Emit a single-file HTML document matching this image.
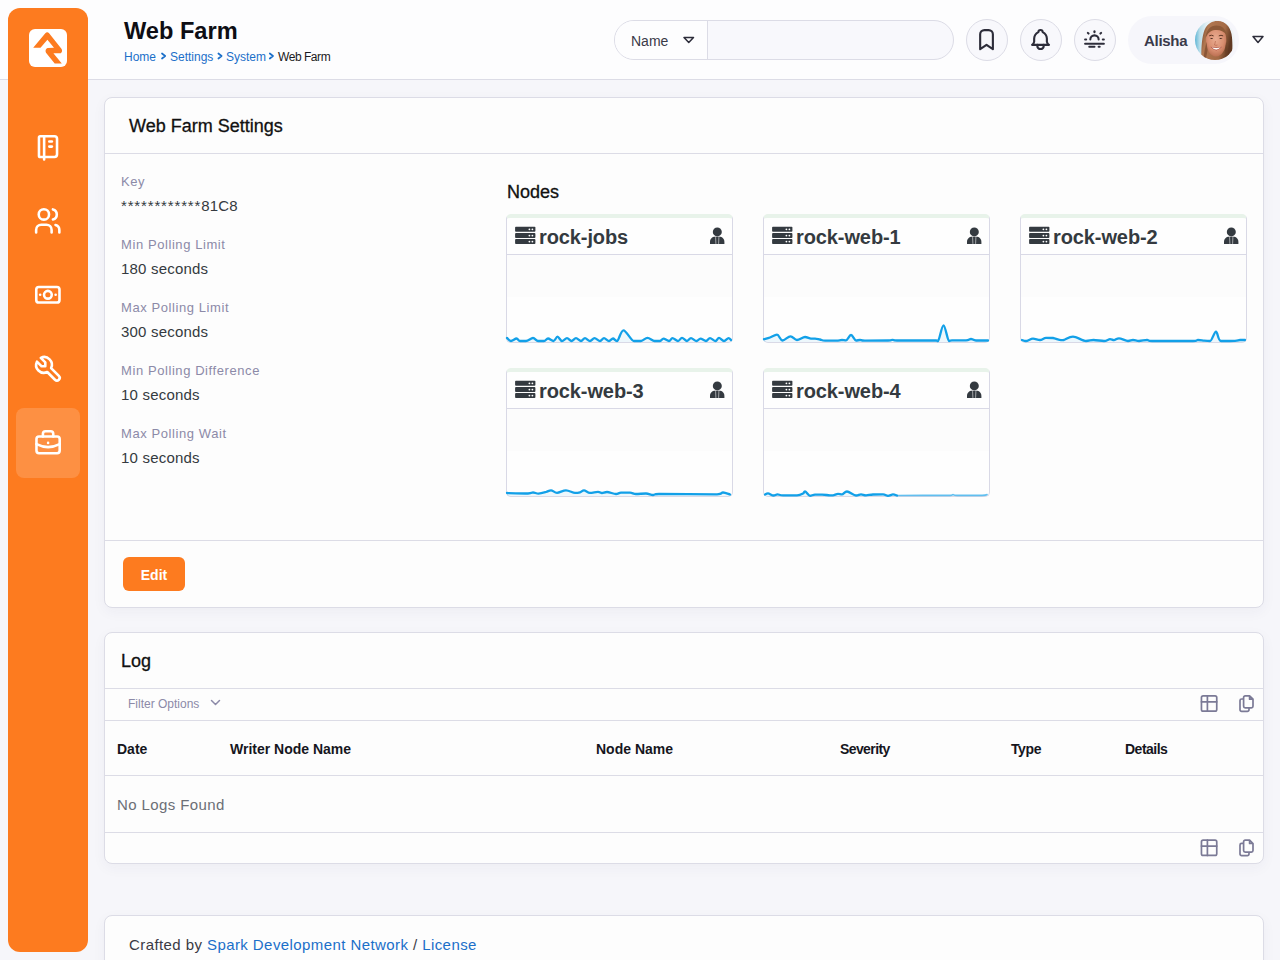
<!DOCTYPE html>
<html><head><meta charset="utf-8">
<style>
*{box-sizing:border-box;margin:0;padding:0}
html,body{width:1280px;height:960px;overflow:hidden}
body{font-family:"Liberation Sans",sans-serif;background:#f6f6fa;position:relative;color:#212529}
.abs{position:absolute}
svg{position:absolute;overflow:visible}
#topbar{position:absolute;left:0;top:0;width:1280px;height:80px;background:#fdfdfe;border-bottom:1px solid #dcdce6}
#side{position:absolute;left:8px;top:8px;width:80px;height:944px;background:#fd7b1f;border-radius:12px}
.panel{position:absolute;left:104px;width:1160px;background:#fdfdfd;border:1px solid #dcdce6;border-radius:8px;box-shadow:0 4px 14px rgba(40,40,90,0.045)}
.t{position:absolute;white-space:nowrap;line-height:1}
.hline{position:absolute;left:0;right:0;height:1px;background:#dcdce6}
.lbl{color:#8c8aa8;font-size:13px;letter-spacing:0.58px}
.val{color:#343a40;font-size:15px;letter-spacing:0.2px}
.card{position:absolute;width:227px;height:129px;border:1px solid #d9d9e6;border-top:4px solid #e8f3ea;border-radius:5px;background:#fefefe;overflow:hidden}
.card .gb{position:absolute;left:0;right:0;top:0;height:4px;background:#e8f3ea}
.card .hd{position:absolute;left:0;right:0;top:0;height:37px;border-bottom:1px solid #d9d9e6}
.card .ch{position:absolute;left:0;right:0;top:37px;height:42px;background:#fcfcfc}
.card .nm{position:absolute;left:32px;top:9px;font-size:20px;font-weight:bold;color:#343a40;letter-spacing:-0.1px;line-height:1}
.th{position:absolute;top:741.5px;font-size:14px;font-weight:bold;color:#16161d;line-height:1}
.sl{fill:none;stroke:#12a0e8;stroke-width:2.3;stroke-linejoin:round;stroke-linecap:round}
.sf{fill:#12a0e8;fill-opacity:0.07;stroke:none}
.ic{fill:none;stroke:#fff;stroke-width:2;stroke-linecap:round;stroke-linejoin:round}
.hi{fill:none;stroke:#2d2d3a;stroke-width:2;stroke-linecap:round;stroke-linejoin:round}
.gi{fill:none;stroke:#7b7a96;stroke-width:2;stroke-linecap:round;stroke-linejoin:round}
</style></head>
<body>
<div id="topbar"></div>
<div id="side"></div>
<div class="abs" style="left:16px;top:408px;width:64px;height:70px;border-radius:8px;background:rgba(255,255,255,0.16)"></div>



<!-- title -->
<div class="t" style="left:124px;top:19.5px;font-size:23.6px;font-weight:bold;color:#0e0e14">Web Farm</div>
<div class="t" style="left:124px;top:50.5px;font-size:12px;color:#1b6fc9">Home</div>
<div class="t" style="left:170px;top:50.5px;font-size:12px;color:#1b6fc9">Settings</div>
<div class="t" style="left:226px;top:50.5px;font-size:12px;color:#1b6fc9">System</div>
<div class="t" style="left:278px;top:50.5px;font-size:12px;color:#1a1a22;letter-spacing:-0.45px">Web Farm</div>
<!-- panel 1 -->
<div class="panel" style="top:97px;height:511px">
  <div class="hline" style="top:55px"></div>
  <div class="hline" style="top:442px"></div>
</div>
<div class="t" style="left:129px;top:117px;font-size:18px;color:#111;-webkit-text-stroke:0.3px #111">Web Farm Settings</div>

<div class="t lbl" style="left:121px;top:175px">Key</div>
<div class="t val" style="left:121px;top:197.5px"><span style="letter-spacing:0.85px">************</span>81C8</div>
<div class="t lbl" style="left:121px;top:237.5px">Min Polling Limit</div>
<div class="t val" style="left:121px;top:261px">180 seconds</div>
<div class="t lbl" style="left:121px;top:300.5px">Max Polling Limit</div>
<div class="t val" style="left:121px;top:324px">300 seconds</div>
<div class="t lbl" style="left:121px;top:363.5px">Min Polling Difference</div>
<div class="t val" style="left:121px;top:387px">10 seconds</div>
<div class="t lbl" style="left:121px;top:426.5px">Max Polling Wait</div>
<div class="t val" style="left:121px;top:450px">10 seconds</div>

<div class="t" style="left:507px;top:183px;font-size:18px;color:#111;-webkit-text-stroke:0.3px #111">Nodes</div>

<div class="card" style="left:506px;top:214px"><div class="hd"></div><div class="ch"></div><div class="nm">rock-jobs</div></div>
<div class="card" style="left:763px;top:214px"><div class="hd"></div><div class="ch"></div><div class="nm">rock-web-1</div></div>
<div class="card" style="left:1020px;top:214px"><div class="hd"></div><div class="ch"></div><div class="nm">rock-web-2</div></div>
<div class="card" style="left:506px;top:368px"><div class="hd"></div><div class="ch"></div><div class="nm">rock-web-3</div></div>
<div class="card" style="left:763px;top:368px"><div class="hd"></div><div class="ch"></div><div class="nm">rock-web-4</div></div>

<svg style="left:0;top:0" width="1280" height="960" viewBox="0 0 1280 960">
  
  <g fill="#343a40" transform="translate(515.1 226.8)">
      <rect x="0" y="0" width="20.3" height="5" rx="0.8"/>
      <rect x="0" y="6.3" width="20.3" height="5" rx="0.8"/>
      <rect x="0" y="12.3" width="20.3" height="5" rx="0.8"/>
      <g fill="#fff"><circle cx="14.3" cy="2.5" r="0.9"/><circle cx="17.3" cy="2.5" r="0.9"/><circle cx="14.3" cy="8.8" r="0.9"/><circle cx="17.3" cy="8.8" r="0.9"/><circle cx="14.3" cy="14.8" r="0.9"/><circle cx="17.3" cy="14.8" r="0.9"/></g>
    </g>
  <g fill="#343a40" transform="translate(772.1 226.8)">
      <rect x="0" y="0" width="20.3" height="5" rx="0.8"/>
      <rect x="0" y="6.3" width="20.3" height="5" rx="0.8"/>
      <rect x="0" y="12.3" width="20.3" height="5" rx="0.8"/>
      <g fill="#fff"><circle cx="14.3" cy="2.5" r="0.9"/><circle cx="17.3" cy="2.5" r="0.9"/><circle cx="14.3" cy="8.8" r="0.9"/><circle cx="17.3" cy="8.8" r="0.9"/><circle cx="14.3" cy="14.8" r="0.9"/><circle cx="17.3" cy="14.8" r="0.9"/></g>
    </g>
  <g fill="#343a40" transform="translate(1029.1 226.8)">
      <rect x="0" y="0" width="20.3" height="5" rx="0.8"/>
      <rect x="0" y="6.3" width="20.3" height="5" rx="0.8"/>
      <rect x="0" y="12.3" width="20.3" height="5" rx="0.8"/>
      <g fill="#fff"><circle cx="14.3" cy="2.5" r="0.9"/><circle cx="17.3" cy="2.5" r="0.9"/><circle cx="14.3" cy="8.8" r="0.9"/><circle cx="17.3" cy="8.8" r="0.9"/><circle cx="14.3" cy="14.8" r="0.9"/><circle cx="17.3" cy="14.8" r="0.9"/></g>
    </g>
  <g fill="#343a40" transform="translate(515.1 380.8)">
      <rect x="0" y="0" width="20.3" height="5" rx="0.8"/>
      <rect x="0" y="6.3" width="20.3" height="5" rx="0.8"/>
      <rect x="0" y="12.3" width="20.3" height="5" rx="0.8"/>
      <g fill="#fff"><circle cx="14.3" cy="2.5" r="0.9"/><circle cx="17.3" cy="2.5" r="0.9"/><circle cx="14.3" cy="8.8" r="0.9"/><circle cx="17.3" cy="8.8" r="0.9"/><circle cx="14.3" cy="14.8" r="0.9"/><circle cx="17.3" cy="14.8" r="0.9"/></g>
    </g>
  <g fill="#343a40" transform="translate(772.1 380.8)">
      <rect x="0" y="0" width="20.3" height="5" rx="0.8"/>
      <rect x="0" y="6.3" width="20.3" height="5" rx="0.8"/>
      <rect x="0" y="12.3" width="20.3" height="5" rx="0.8"/>
      <g fill="#fff"><circle cx="14.3" cy="2.5" r="0.9"/><circle cx="17.3" cy="2.5" r="0.9"/><circle cx="14.3" cy="8.8" r="0.9"/><circle cx="17.3" cy="8.8" r="0.9"/><circle cx="14.3" cy="14.8" r="0.9"/><circle cx="17.3" cy="14.8" r="0.9"/></g>
    </g>
  <g transform="translate(717.3 231.9)">
      <circle cx="0" cy="0" r="4.5" fill="#343a40"/>
      <path d="M-7.3 12 V10.2 C-7.3 6.8 -5.2 4.9 -2.2 4.9 H2 C5 4.9 7.1 6.8 7.1 10.2 V12 Z" fill="#343a40"/>
      <path d="M-1.7 5.2 L-1.4 12 M1.6 5.2 L1.3 12" stroke="#fff" stroke-width="0.55"/>
    </g>
  <g transform="translate(974.3 231.9)">
      <circle cx="0" cy="0" r="4.5" fill="#343a40"/>
      <path d="M-7.3 12 V10.2 C-7.3 6.8 -5.2 4.9 -2.2 4.9 H2 C5 4.9 7.1 6.8 7.1 10.2 V12 Z" fill="#343a40"/>
      <path d="M-1.7 5.2 L-1.4 12 M1.6 5.2 L1.3 12" stroke="#fff" stroke-width="0.55"/>
    </g>
  <g transform="translate(1231.3 231.9)">
      <circle cx="0" cy="0" r="4.5" fill="#343a40"/>
      <path d="M-7.3 12 V10.2 C-7.3 6.8 -5.2 4.9 -2.2 4.9 H2 C5 4.9 7.1 6.8 7.1 10.2 V12 Z" fill="#343a40"/>
      <path d="M-1.7 5.2 L-1.4 12 M1.6 5.2 L1.3 12" stroke="#fff" stroke-width="0.55"/>
    </g>
  <g transform="translate(717.3 385.9)">
      <circle cx="0" cy="0" r="4.5" fill="#343a40"/>
      <path d="M-7.3 12 V10.2 C-7.3 6.8 -5.2 4.9 -2.2 4.9 H2 C5 4.9 7.1 6.8 7.1 10.2 V12 Z" fill="#343a40"/>
      <path d="M-1.7 5.2 L-1.4 12 M1.6 5.2 L1.3 12" stroke="#fff" stroke-width="0.55"/>
    </g>
  <g transform="translate(974.3 385.9)">
      <circle cx="0" cy="0" r="4.5" fill="#343a40"/>
      <path d="M-7.3 12 V10.2 C-7.3 6.8 -5.2 4.9 -2.2 4.9 H2 C5 4.9 7.1 6.8 7.1 10.2 V12 Z" fill="#343a40"/>
      <path d="M-1.7 5.2 L-1.4 12 M1.6 5.2 L1.3 12" stroke="#fff" stroke-width="0.55"/>
    </g>
</svg>
<svg style="left:0;top:0" width="1280" height="960" viewBox="0 0 1280 960">
<path d="M507.0 338.0 C507.7 338.5 509.4 341.0 511.0 341.0 C512.6 341.0 515.0 338.5 516.5 338.5 C518.0 338.5 518.4 341.0 520.0 341.0 C521.6 341.0 523.8 341.0 526.0 341.0 C528.2 341.0 531.0 338.0 533.0 338.0 C535.0 338.0 536.2 341.0 538.0 341.0 C539.8 341.0 542.3 341.0 544.0 341.0 C545.7 341.0 546.4 338.5 548.0 338.5 C549.6 338.5 551.9 341.0 553.5 341.0 C555.1 341.0 556.1 336.7 557.5 336.7 C558.9 336.7 560.4 341.0 562.0 341.0 C563.6 341.0 565.4 338.1 567.0 338.1 C568.6 338.1 570.0 341.0 571.5 341.0 C573.0 341.0 574.4 338.1 576.0 338.1 C577.6 338.1 579.5 341.0 581.0 341.0 C582.5 341.0 583.5 338.1 585.0 338.1 C586.5 338.1 588.4 341.0 590.0 341.0 C591.6 341.0 592.8 338.1 594.5 338.1 C596.2 338.1 598.4 341.0 600.0 341.0 C601.6 341.0 602.5 338.1 604.0 338.1 C605.5 338.1 607.5 341.0 609.0 341.0 C610.5 341.0 611.7 338.5 613.0 338.5 C614.3 338.5 615.2 341.0 617.0 341.0 C618.8 341.0 620.7 330.3 623.5 330.3 C626.3 330.3 631.1 341.0 634.0 341.0 C636.9 341.0 638.8 341.0 641.0 341.0 C643.2 341.0 645.2 337.8 647.5 337.8 C649.8 337.8 652.4 341.0 654.5 341.0 C656.6 341.0 658.5 341.0 660.0 341.0 C661.5 341.0 662.0 338.6 663.5 338.6 C665.0 338.6 667.5 341.0 669.0 341.0 C670.5 341.0 671.0 338.1 672.5 338.1 C674.0 338.1 676.4 341.0 678.0 341.0 C679.6 341.0 680.5 337.8 682.0 337.8 C683.5 337.8 685.5 341.0 687.0 341.0 C688.5 341.0 689.4 338.1 691.0 338.1 C692.6 338.1 694.9 341.0 696.5 341.0 C698.1 341.0 698.9 338.6 700.5 338.6 C702.1 338.6 704.4 341.0 706.0 341.0 C707.6 341.0 708.4 338.1 710.0 338.1 C711.6 338.1 714.0 341.0 715.5 341.0 C717.0 341.0 717.6 337.8 719.0 337.8 C720.4 337.8 722.4 341.0 724.0 341.0 C725.6 341.0 727.3 338.1 728.5 338.1 C729.7 338.1 730.6 339.7 731.0 340.0 L731.0 342 L507.0 342 Z" class="sf"/>
<path d="M507.0 338.0 C507.7 338.5 509.4 341.0 511.0 341.0 C512.6 341.0 515.0 338.5 516.5 338.5 C518.0 338.5 518.4 341.0 520.0 341.0 C521.6 341.0 523.8 341.0 526.0 341.0 C528.2 341.0 531.0 338.0 533.0 338.0 C535.0 338.0 536.2 341.0 538.0 341.0 C539.8 341.0 542.3 341.0 544.0 341.0 C545.7 341.0 546.4 338.5 548.0 338.5 C549.6 338.5 551.9 341.0 553.5 341.0 C555.1 341.0 556.1 336.7 557.5 336.7 C558.9 336.7 560.4 341.0 562.0 341.0 C563.6 341.0 565.4 338.1 567.0 338.1 C568.6 338.1 570.0 341.0 571.5 341.0 C573.0 341.0 574.4 338.1 576.0 338.1 C577.6 338.1 579.5 341.0 581.0 341.0 C582.5 341.0 583.5 338.1 585.0 338.1 C586.5 338.1 588.4 341.0 590.0 341.0 C591.6 341.0 592.8 338.1 594.5 338.1 C596.2 338.1 598.4 341.0 600.0 341.0 C601.6 341.0 602.5 338.1 604.0 338.1 C605.5 338.1 607.5 341.0 609.0 341.0 C610.5 341.0 611.7 338.5 613.0 338.5 C614.3 338.5 615.2 341.0 617.0 341.0 C618.8 341.0 620.7 330.3 623.5 330.3 C626.3 330.3 631.1 341.0 634.0 341.0 C636.9 341.0 638.8 341.0 641.0 341.0 C643.2 341.0 645.2 337.8 647.5 337.8 C649.8 337.8 652.4 341.0 654.5 341.0 C656.6 341.0 658.5 341.0 660.0 341.0 C661.5 341.0 662.0 338.6 663.5 338.6 C665.0 338.6 667.5 341.0 669.0 341.0 C670.5 341.0 671.0 338.1 672.5 338.1 C674.0 338.1 676.4 341.0 678.0 341.0 C679.6 341.0 680.5 337.8 682.0 337.8 C683.5 337.8 685.5 341.0 687.0 341.0 C688.5 341.0 689.4 338.1 691.0 338.1 C692.6 338.1 694.9 341.0 696.5 341.0 C698.1 341.0 698.9 338.6 700.5 338.6 C702.1 338.6 704.4 341.0 706.0 341.0 C707.6 341.0 708.4 338.1 710.0 338.1 C711.6 338.1 714.0 341.0 715.5 341.0 C717.0 341.0 717.6 337.8 719.0 337.8 C720.4 337.8 722.4 341.0 724.0 341.0 C725.6 341.0 727.3 338.1 728.5 338.1 C729.7 338.1 730.6 339.7 731.0 340.0" class="sl"/>
<path d="M764.0 339.2 C765.0 338.9 767.8 338.3 770.0 337.5 C772.2 336.7 774.9 334.6 777.0 334.6 C779.1 334.6 780.2 340.5 782.5 340.5 C784.8 340.5 788.1 336.3 790.5 336.3 C792.9 336.3 794.6 340.0 797.0 340.0 C799.4 340.0 802.7 337.0 805.0 337.0 C807.3 337.0 809.3 338.6 811.0 338.6 C812.7 338.6 813.5 338.6 815.0 338.6 C816.5 338.6 818.3 339.2 820.0 339.5 C821.7 339.8 822.0 340.6 825.0 340.6 C828.0 340.6 835.2 340.6 838.0 340.6 C840.8 340.6 840.7 340.0 842.0 340.0 C843.3 340.0 844.5 340.3 846.0 340.3 C847.5 340.3 849.3 335.0 851.0 335.0 C852.7 335.0 854.5 340.5 856.0 340.5 C857.5 340.5 858.5 340.0 860.0 340.0 C861.5 340.0 860.3 340.6 865.0 340.6 C869.7 340.6 883.4 340.6 888.0 340.5 C892.5 340.4 891.0 339.8 892.5 339.8 C894.0 339.8 892.5 340.5 897.0 340.5 C904.2 340.5 929.2 340.5 936.0 340.5 C938.0 340.5 936.8 341.2 938.0 341.2 C939.2 341.2 941.7 325.3 943.5 325.3 C945.3 325.3 947.6 341.0 949.0 341.0 C950.4 341.0 949.2 340.4 952.0 340.4 C954.8 340.4 962.8 340.4 966.0 340.4 C969.2 340.4 969.3 339.0 971.0 339.0 C972.7 339.0 973.2 340.5 976.0 340.5 C978.8 340.5 986.0 340.5 988.0 340.5 L988.0 342 L764.0 342 Z" class="sf"/>
<path d="M764.0 339.2 C765.0 338.9 767.8 338.3 770.0 337.5 C772.2 336.7 774.9 334.6 777.0 334.6 C779.1 334.6 780.2 340.5 782.5 340.5 C784.8 340.5 788.1 336.3 790.5 336.3 C792.9 336.3 794.6 340.0 797.0 340.0 C799.4 340.0 802.7 337.0 805.0 337.0 C807.3 337.0 809.3 338.6 811.0 338.6 C812.7 338.6 813.5 338.6 815.0 338.6 C816.5 338.6 818.3 339.2 820.0 339.5 C821.7 339.8 822.0 340.6 825.0 340.6 C828.0 340.6 835.2 340.6 838.0 340.6 C840.8 340.6 840.7 340.0 842.0 340.0 C843.3 340.0 844.5 340.3 846.0 340.3 C847.5 340.3 849.3 335.0 851.0 335.0 C852.7 335.0 854.5 340.5 856.0 340.5 C857.5 340.5 858.5 340.0 860.0 340.0 C861.5 340.0 860.3 340.6 865.0 340.6 C869.7 340.6 883.4 340.6 888.0 340.5 C892.5 340.4 891.0 339.8 892.5 339.8 C894.0 339.8 892.5 340.5 897.0 340.5 C904.2 340.5 929.2 340.5 936.0 340.5 C938.0 340.5 936.8 341.2 938.0 341.2 C939.2 341.2 941.7 325.3 943.5 325.3 C945.3 325.3 947.6 341.0 949.0 341.0 C950.4 341.0 949.2 340.4 952.0 340.4 C954.8 340.4 962.8 340.4 966.0 340.4 C969.2 340.4 969.3 339.0 971.0 339.0 C972.7 339.0 973.2 340.5 976.0 340.5 C978.8 340.5 986.0 340.5 988.0 340.5" class="sl"/>
<path d="M1022.0 340.0 C1022.7 340.2 1024.2 341.0 1026.0 341.0 C1027.8 341.0 1030.7 338.6 1033.0 338.6 C1035.3 338.6 1037.8 340.0 1040.0 340.0 C1042.2 340.0 1043.8 337.9 1046.0 337.9 C1048.2 337.9 1050.5 337.9 1053.0 338.0 C1055.5 338.4 1059.2 340.1 1061.0 340.1 C1062.8 340.1 1062.0 340.1 1064.0 340.0 C1066.0 339.4 1069.3 336.6 1073.0 336.6 C1076.7 336.6 1082.6 341.0 1086.0 341.0 C1089.4 341.0 1090.5 340.0 1093.5 340.0 C1096.5 340.0 1101.2 341.0 1104.0 341.0 C1106.8 341.0 1108.3 339.2 1110.0 339.2 C1111.7 339.2 1112.5 340.1 1114.0 340.1 C1115.5 340.1 1116.7 338.3 1119.0 338.3 C1121.3 338.3 1125.7 341.0 1128.0 341.0 C1130.3 341.0 1131.2 340.0 1133.0 340.0 C1134.8 340.0 1136.7 341.0 1139.0 341.0 C1141.3 341.0 1144.8 340.0 1147.0 340.0 C1149.2 340.0 1147.0 341.0 1152.0 341.0 C1159.7 341.0 1185.3 341.0 1193.0 341.0 C1198.0 341.0 1196.2 340.0 1198.0 340.0 C1199.8 340.0 1202.0 340.4 1204.0 340.6 C1206.0 340.8 1208.0 341.0 1210.0 341.0 C1212.0 341.0 1214.2 331.6 1216.0 331.6 C1217.8 331.6 1217.8 341.0 1221.0 341.0 C1224.2 341.0 1231.8 341.0 1235.0 340.8 C1238.2 340.6 1238.3 340.0 1240.0 340.0 C1241.7 340.0 1244.2 340.0 1245.0 340.0 L1245.0 342 L1022.0 342 Z" class="sf"/>
<path d="M1022.0 340.0 C1022.7 340.2 1024.2 341.0 1026.0 341.0 C1027.8 341.0 1030.7 338.6 1033.0 338.6 C1035.3 338.6 1037.8 340.0 1040.0 340.0 C1042.2 340.0 1043.8 337.9 1046.0 337.9 C1048.2 337.9 1050.5 337.9 1053.0 338.0 C1055.5 338.4 1059.2 340.1 1061.0 340.1 C1062.8 340.1 1062.0 340.1 1064.0 340.0 C1066.0 339.4 1069.3 336.6 1073.0 336.6 C1076.7 336.6 1082.6 341.0 1086.0 341.0 C1089.4 341.0 1090.5 340.0 1093.5 340.0 C1096.5 340.0 1101.2 341.0 1104.0 341.0 C1106.8 341.0 1108.3 339.2 1110.0 339.2 C1111.7 339.2 1112.5 340.1 1114.0 340.1 C1115.5 340.1 1116.7 338.3 1119.0 338.3 C1121.3 338.3 1125.7 341.0 1128.0 341.0 C1130.3 341.0 1131.2 340.0 1133.0 340.0 C1134.8 340.0 1136.7 341.0 1139.0 341.0 C1141.3 341.0 1144.8 340.0 1147.0 340.0 C1149.2 340.0 1147.0 341.0 1152.0 341.0 C1159.7 341.0 1185.3 341.0 1193.0 341.0 C1198.0 341.0 1196.2 340.0 1198.0 340.0 C1199.8 340.0 1202.0 340.4 1204.0 340.6 C1206.0 340.8 1208.0 341.0 1210.0 341.0 C1212.0 341.0 1214.2 331.6 1216.0 331.6 C1217.8 331.6 1217.8 341.0 1221.0 341.0 C1224.2 341.0 1231.8 341.0 1235.0 340.8 C1238.2 340.6 1238.3 340.0 1240.0 340.0 C1241.7 340.0 1244.2 340.0 1245.0 340.0" class="sl"/>
<path d="M507.0 493.0 C510.5 493.1 523.7 493.5 528.0 493.5 C532.3 493.5 531.2 492.5 533.0 492.5 C534.8 492.5 536.3 493.6 538.5 493.6 C540.7 493.6 543.9 492.6 546.0 492.0 C548.1 491.4 549.2 490.3 551.0 490.3 C552.8 490.3 554.5 492.8 557.0 492.8 C559.5 492.8 563.0 490.3 566.0 490.3 C569.0 490.3 572.7 492.9 575.0 492.9 C577.3 492.9 578.5 492.7 580.0 492.3 C581.5 491.9 582.3 490.3 584.0 490.3 C585.7 490.3 587.7 492.8 590.0 492.8 C592.3 492.8 596.0 491.8 598.0 491.8 C600.0 491.8 600.5 493.0 602.0 493.0 C603.5 493.0 604.7 492.0 607.0 492.0 C609.3 492.0 613.7 494.0 616.0 494.0 C618.3 494.0 618.7 492.7 621.0 492.7 C623.3 492.7 627.5 492.7 630.0 492.7 C632.5 492.7 633.3 494.0 636.0 494.0 C638.7 494.0 643.2 493.5 646.0 493.5 C648.8 493.5 650.8 495.0 653.0 495.0 C655.2 495.0 653.0 494.0 659.0 494.0 C669.7 494.0 706.3 494.3 717.0 494.3 C723.0 494.3 720.8 492.5 723.0 492.5 C725.2 492.5 728.8 494.2 730.0 494.5 L730.0 496 L507.0 496 Z" class="sf"/>
<path d="M507.0 493.0 C510.5 493.1 523.7 493.5 528.0 493.5 C532.3 493.5 531.2 492.5 533.0 492.5 C534.8 492.5 536.3 493.6 538.5 493.6 C540.7 493.6 543.9 492.6 546.0 492.0 C548.1 491.4 549.2 490.3 551.0 490.3 C552.8 490.3 554.5 492.8 557.0 492.8 C559.5 492.8 563.0 490.3 566.0 490.3 C569.0 490.3 572.7 492.9 575.0 492.9 C577.3 492.9 578.5 492.7 580.0 492.3 C581.5 491.9 582.3 490.3 584.0 490.3 C585.7 490.3 587.7 492.8 590.0 492.8 C592.3 492.8 596.0 491.8 598.0 491.8 C600.0 491.8 600.5 493.0 602.0 493.0 C603.5 493.0 604.7 492.0 607.0 492.0 C609.3 492.0 613.7 494.0 616.0 494.0 C618.3 494.0 618.7 492.7 621.0 492.7 C623.3 492.7 627.5 492.7 630.0 492.7 C632.5 492.7 633.3 494.0 636.0 494.0 C638.7 494.0 643.2 493.5 646.0 493.5 C648.8 493.5 650.8 495.0 653.0 495.0 C655.2 495.0 653.0 494.0 659.0 494.0 C669.7 494.0 706.3 494.3 717.0 494.3 C723.0 494.3 720.8 492.5 723.0 492.5 C725.2 492.5 728.8 494.2 730.0 494.5" class="sl"/>
<path d="M765.0 494.5 C765.5 494.3 766.6 493.4 768.0 493.4 C769.4 493.4 771.9 495.5 773.5 495.5 C775.1 495.5 775.9 494.4 777.5 494.4 C779.1 494.4 779.8 495.3 783.0 495.3 C786.2 495.3 793.7 495.3 797.0 495.3 C800.3 495.3 801.7 494.2 803.0 493.5 C804.3 492.8 803.8 491.3 805.0 491.3 C806.2 491.3 808.3 495.8 810.0 495.8 C811.7 495.8 813.0 494.6 815.0 494.6 C817.0 494.6 819.5 494.6 822.0 494.6 C824.5 494.6 828.2 495.3 830.0 495.3 C831.8 495.3 831.7 495.3 833.0 495.3 C834.3 495.3 836.5 493.8 838.0 493.8 C839.5 493.8 840.5 494.4 842.0 494.4 C843.5 494.4 844.7 491.5 847.0 491.5 C849.3 491.5 853.7 495.5 856.0 495.5 C858.3 495.5 859.3 494.4 861.0 494.4 C862.7 494.4 864.0 495.3 866.0 495.3 C868.0 495.3 870.2 494.6 873.0 494.5 C875.8 494.4 880.5 494.4 883.0 494.4 C885.5 494.4 886.3 495.8 888.0 495.8 C889.7 495.8 891.5 494.4 893.0 494.4 C894.5 494.4 896.3 495.3 897.0 495.5 L897.0 496 L765.0 496 Z" class="sf"/>
<path d="M765.0 494.5 C765.5 494.3 766.6 493.4 768.0 493.4 C769.4 493.4 771.9 495.5 773.5 495.5 C775.1 495.5 775.9 494.4 777.5 494.4 C779.1 494.4 779.8 495.3 783.0 495.3 C786.2 495.3 793.7 495.3 797.0 495.3 C800.3 495.3 801.7 494.2 803.0 493.5 C804.3 492.8 803.8 491.3 805.0 491.3 C806.2 491.3 808.3 495.8 810.0 495.8 C811.7 495.8 813.0 494.6 815.0 494.6 C817.0 494.6 819.5 494.6 822.0 494.6 C824.5 494.6 828.2 495.3 830.0 495.3 C831.8 495.3 831.7 495.3 833.0 495.3 C834.3 495.3 836.5 493.8 838.0 493.8 C839.5 493.8 840.5 494.4 842.0 494.4 C843.5 494.4 844.7 491.5 847.0 491.5 C849.3 491.5 853.7 495.5 856.0 495.5 C858.3 495.5 859.3 494.4 861.0 494.4 C862.7 494.4 864.0 495.3 866.0 495.3 C868.0 495.3 870.2 494.6 873.0 494.5 C875.8 494.4 880.5 494.4 883.0 494.4 C885.5 494.4 886.3 495.8 888.0 495.8 C889.7 495.8 891.5 494.4 893.0 494.4 C894.5 494.4 896.3 495.3 897.0 495.5" class="sl"/>
<path d="M897.0 495.5 C905.8 495.5 940.7 495.4 950.0 495.3 C953.0 495.2 951.8 494.7 953.0 494.7 C954.2 494.7 953.0 495.3 957.0 495.3 C961.8 495.3 977.0 495.3 982.0 495.3 C987.0 495.3 986.2 494.6 987.0 494.5 L987.0 496 L897.0 496 Z" class="sf"/>
<path d="M897.0 495.5 C905.8 495.5 940.7 495.4 950.0 495.3 C953.0 495.2 951.8 494.7 953.0 494.7 C954.2 494.7 953.0 495.3 957.0 495.3 C961.8 495.3 977.0 495.3 982.0 495.3 C987.0 495.3 986.2 494.6 987.0 494.5" class="sl" style="stroke-opacity:0.65;stroke-width:1.7"/>
</svg>

<div class="abs" style="left:123px;top:557px;width:62px;height:34px;background:#fd7b1f;border-radius:6px"></div>
<div class="t" style="left:123px;top:568px;width:62px;text-align:center;font-size:14px;font-weight:bold;color:#fff">Edit</div>

<!-- panel 2 -->
<div class="panel" style="top:632px;height:232px">
  <div class="hline" style="top:55px"></div>
  <div class="hline" style="top:87px"></div>
  <div class="hline" style="top:142px"></div>
  <div class="hline" style="top:199px"></div>
</div>
<div class="t" style="left:121px;top:652px;font-size:18px;color:#111;-webkit-text-stroke:0.3px #111">Log</div>
<div class="t" style="left:128px;top:698px;font-size:12px;color:#8c8aa8">Filter Options</div>
<div class="th" style="left:117px">Date</div>
<div class="th" style="left:230px">Writer Node Name</div>
<div class="th" style="left:596px">Node Name</div>
<div class="th" style="left:840px;letter-spacing:-0.6px">Severity</div>
<div class="th" style="left:1011px;letter-spacing:-0.4px">Type</div>
<div class="th" style="left:1125px;letter-spacing:-0.5px">Details</div>
<div class="t" style="left:117px;top:797px;font-size:15px;color:#6c6f76;letter-spacing:0.4px">No Logs Found</div>

<!-- footer -->
<div class="panel" style="top:915px;height:80px"></div>
<div class="t" style="left:129px;top:937px;font-size:15px;color:#3a3a44;letter-spacing:0.42px">Crafted by <span style="color:#1b6fc9">Spark Development Network</span> / <span style="color:#1b6fc9">License</span></div>

<!-- search -->
<div class="abs" style="left:614px;top:20px;width:340px;height:40px;border:1px solid #dcdce6;border-radius:20px;background:#f8f8fc;overflow:hidden">
  <div class="abs" style="left:0;top:0;width:93px;height:38px;background:#fdfdfe;border-right:1px solid #dcdce6"></div>
</div>
<div class="t" style="left:631px;top:33.5px;font-size:14px;color:#3a3a48">Name</div>

<!-- circle buttons -->
<div class="abs" style="left:966px;top:19px;width:42px;height:42px;border:1px solid #dcdce6;border-radius:50%;background:#f8f8fc;z-index:-0"></div>
<div class="abs" style="left:1020px;top:19px;width:42px;height:42px;border:1px solid #dcdce6;border-radius:50%;background:#f8f8fc"></div>
<div class="abs" style="left:1074px;top:19px;width:42px;height:42px;border:1px solid #dcdce6;border-radius:50%;background:#f8f8fc"></div>

<!-- user pill -->
<div class="abs" style="left:1128px;top:16px;width:111px;height:48px;border-radius:24px;background:#f6f6fb"></div>
<div class="t" style="left:1144px;top:33px;font-size:15px;font-weight:bold;color:#3a3a4a;letter-spacing:-0.3px">Alisha</div>
<svg style="left:1195px;top:20px" width="40" height="40" viewBox="0 0 40 40">
  <defs><clipPath id="av"><circle cx="20" cy="20" r="20"/></clipPath>
  <radialGradient id="sk" cx="0.48" cy="0.4" r="0.65"><stop offset="0" stop-color="#e9ab90"/><stop offset="0.6" stop-color="#d98f71"/><stop offset="1" stop-color="#b5694c"/></radialGradient>
  <linearGradient id="hr" x1="0" y1="0" x2="1" y2="0.3"><stop offset="0" stop-color="#6e4128"/><stop offset="0.25" stop-color="#b07750"/><stop offset="0.75" stop-color="#a46a45"/><stop offset="1" stop-color="#5f3822"/></linearGradient>
  <linearGradient id="bgb" x1="0" y1="0" x2="1" y2="0"><stop offset="0" stop-color="#5fb6d6"/><stop offset="0.12" stop-color="#b9dde9"/><stop offset="0.3" stop-color="#e8f2f6"/><stop offset="1" stop-color="#f0f4f7"/></linearGradient></defs>
  <g clip-path="url(#av)">
    <rect width="40" height="40" fill="url(#bgb)"/>
    <path d="M6.5 42 C6 32 6.5 18 9.5 10 C12.5 2.5 19 0.5 23.5 1 C30 1.5 35 6 36.5 14 C38 22 37.5 34 36 42 Z" fill="url(#hr)"/>
    <path d="M11 21 C10.5 12.5 14.5 7.5 21 7.5 C27.5 7.5 31.5 12 31.3 20.5 C31 30 26.5 36.5 21 36.5 C15.5 36.5 11.5 30 11 21 Z" fill="url(#sk)"/>
    <path d="M10.5 18 C11 10 15.5 5.5 21.5 5.5 C26.5 5.5 30.5 8.5 32 15 C28.5 10.8 24.5 9.5 20 10 C15.5 10.5 12.5 13.5 10.5 18 Z" fill="#8d5a38"/>
    <path d="M8.5 40 C9 32 10.5 26 11.5 22 L12.5 30 C12 34 11 38 10.5 40 Z" fill="#7a4a2e" opacity="0.7"/>
    <path d="M33.5 40 C33 32 31.5 26 31 22 L30 30 C30.5 34 31.5 38 32 40 Z" fill="#6a3f26" opacity="0.7"/>
    <path d="M14.2 15.8 Q16.4 14.6 18.6 15.9" stroke="#5e3624" stroke-width="1" fill="none"/>
    <path d="M23.8 15.9 Q26 14.6 28.2 15.9" stroke="#5e3624" stroke-width="1" fill="none"/>
    <path d="M14.8 18.6 Q16.5 17.4 18.2 18.7 Q16.5 19.2 14.8 18.6 Z" fill="#3f251a"/>
    <path d="M24.2 18.7 Q25.9 17.4 27.6 18.6 Q25.9 19.2 24.2 18.7 Z" fill="#3f251a"/>
    <path d="M20.5 21 Q19.8 24 19.5 25 Q21 25.8 22.5 25" stroke="#b86a50" stroke-width="0.7" fill="none"/>
    <path d="M15.4 26.8 Q21.2 34 27 26.8 Q21.2 28.4 15.4 26.8 Z" fill="#a8493e"/>
    <path d="M16.4 27.3 Q21.2 32 26 27.3 Q21.2 28.7 16.4 27.3 Z" fill="#fdfaf6"/>
  </g>
</svg>
<svg style="left:0;top:0" width="1280" height="960" viewBox="0 0 1280 960">
  <!-- logo -->
  <rect x="29" y="29" width="38" height="38" rx="6" fill="#fff"/>
  <path d="M33.2 47.8 L45.3 33.2 Q47.2 31.5 49.1 33.2 L61.6 49 Q62.9 51.5 60.8 53.2 L53.4 53.2 L61.8 63.6 L54.7 63.6 L46 52.8 Q44.5 49.5 47.6 48 L54 47.8 L47.4 39.7 L40.5 47.8 Z" fill="#fd7b1f"/>
  <!-- notebook -->
  <g class="ic" transform="translate(32.52 131.13) scale(1.29)"><path d="M6 4h11a2 2 0 0 1 2 2v12a2 2 0 0 1 -2 2h-11a1 1 0 0 1 -1 -1v-14a1 1 0 0 1 1 -1m3 0v18"/><path d="M13 8l2 0"/><path d="M13 12l2 0"/></g>
  <!-- users -->
  <g class="ic" transform="translate(32.27 205.4) scale(1.29)"><path d="M9 7m-4 0a4 4 0 1 0 8 0a4 4 0 1 0 -8 0"/><path d="M3 21v-2a4 4 0 0 1 4 -4h4a4 4 0 0 1 4 4v2"/><path d="M16 3.13a4 4 0 0 1 0 7.75"/><path d="M21 21v-2a4 4 0 0 0 -3 -3.85"/></g>
  <!-- cash -->
  <g class="ic" transform="translate(32.4 279.3) scale(1.29)"><path d="M12 12m-3 0a3 3 0 1 0 6 0a3 3 0 1 0 -6 0"/><path d="M3 6m0 2a2 2 0 0 1 2 -2h14a2 2 0 0 1 2 2v8a2 2 0 0 1 -2 2h-14a2 2 0 0 1 -2 -2z"/><path d="M18 12l.01 0"/><path d="M6 12l.01 0"/></g>
  <!-- tool -->
  <g class="ic" transform="translate(32.4 353.3) scale(1.29)"><path d="M7 10h3v-3l-3.5 -3.5a6 6 0 0 1 8 8l6 6a2 2 0 0 1 -3 3l-6 -6a6 6 0 0 1 -8 -8l3.5 3.5"/></g>
  <!-- briefcase -->
  <g class="ic" transform="translate(32.6 427.4) scale(1.29)"><path d="M3 7m0 2a2 2 0 0 1 2 -2h14a2 2 0 0 1 2 2v9a2 2 0 0 1 -2 2h-14a2 2 0 0 1 -2 -2z"/><path d="M8 7v-2a2 2 0 0 1 2 -2h4a2 2 0 0 1 2 2v2"/><path d="M12 12l0 .01"/><path d="M3 13a20 20 0 0 0 18 0"/></g>

  <!-- header icons -->
  <g class="hi" transform="translate(973.8 26.9) scale(1.06)"><path d="M18 7v14l-6 -4l-6 4v-14a4 4 0 0 1 4 -4h4a4 4 0 0 1 4 4z"/></g>
  <g class="hi" transform="translate(1027.8 26.8) scale(1.06)"><path d="M10 5a2 2 0 1 1 4 0a7 7 0 0 1 4 6v3a4 4 0 0 0 2 3h-16a4 4 0 0 0 2 -3v-3a7 7 0 0 1 4 -6"/><path d="M9 17v1a3 3 0 0 0 6 0v-1"/></g>
  <g class="hi" transform="translate(1082 26) scale(1.04)"><path d="M3 13h1"/><path d="M20 13h1"/><path d="M5.6 6.6l.7 .7"/><path d="M18.4 6.6l-.7 .7"/><path d="M8 13a4 4 0 1 1 8 0"/><path d="M3 17h18"/><path d="M7 20h5"/><path d="M16 20h1"/><path d="M12 5v1"/></g>
  <!-- dropdown triangles -->
  <path d="M684 37.5 H693.5 L688.75 42.5 Z" fill="none" stroke="#2d2d3a" stroke-width="1.5" stroke-linejoin="round"/>
  <path d="M1253 36.5 H1263 L1258 42.5 Z" fill="none" stroke="#2d2d3a" stroke-width="1.5" stroke-linejoin="round"/>
  <!-- breadcrumb chevrons -->
  <g fill="none" stroke="#1b6fc9" stroke-width="1.7" stroke-linecap="round" stroke-linejoin="round">
    <path d="M162 53.5 L165.2 56 L162 58.5"/>
    <path d="M218.4 53.5 L221.6 56 L218.4 58.5"/>
    <path d="M269.8 53.5 L273 56 L269.8 58.5"/>
  </g>
  <!-- filter chevron -->
  <path d="M211.5 700.5 L215.5 704.5 L219.5 700.5" fill="none" stroke="#8c8aa8" stroke-width="1.5" stroke-linecap="round" stroke-linejoin="round"/>
  <!-- table icons -->
  <g class="gi" transform="translate(1198.9 693.3) scale(0.85)"><path d="M3 5a2 2 0 0 1 2 -2h14a2 2 0 0 1 2 2v14a2 2 0 0 1 -2 2h-14a2 2 0 0 1 -2 -2v-14z"/><path d="M3 10h18"/><path d="M10 3v18"/></g>
  <g class="gi" transform="translate(1198.9 837.6) scale(0.85)"><path d="M3 5a2 2 0 0 1 2 -2h14a2 2 0 0 1 2 2v14a2 2 0 0 1 -2 2h-14a2 2 0 0 1 -2 -2v-14z"/><path d="M3 10h18"/><path d="M10 3v18"/></g>
  <g fill="none" stroke="#7b7a96" stroke-width="1.7" stroke-linejoin="round">
    <path d="M1243.2 699 H1241.6 a1.6 1.6 0 0 0 -1.6 1.6 V709.8 a1.6 1.6 0 0 0 1.6 1.6 H1247.4 a1.6 1.6 0 0 0 1.6 -1.6 V708"/>
    <path d="M1245.2 695.8 H1249.6 L1253 699.2 V706.2 a1.6 1.6 0 0 1 -1.6 1.6 H1245.2 a1.6 1.6 0 0 1 -1.6 -1.6 V697.4 a1.6 1.6 0 0 1 1.6 -1.6 Z M1249.6 695.8 V699.2 H1253"/>
  </g>
  <g fill="none" stroke="#7b7a96" stroke-width="1.7" stroke-linejoin="round" transform="translate(0 144.3)">
    <path d="M1243.2 699 H1241.6 a1.6 1.6 0 0 0 -1.6 1.6 V709.8 a1.6 1.6 0 0 0 1.6 1.6 H1247.4 a1.6 1.6 0 0 0 1.6 -1.6 V708"/>
    <path d="M1245.2 695.8 H1249.6 L1253 699.2 V706.2 a1.6 1.6 0 0 1 -1.6 1.6 H1245.2 a1.6 1.6 0 0 1 -1.6 -1.6 V697.4 a1.6 1.6 0 0 1 1.6 -1.6 Z M1249.6 695.8 V699.2 H1253"/>
  </g>
</svg>
</body></html>
